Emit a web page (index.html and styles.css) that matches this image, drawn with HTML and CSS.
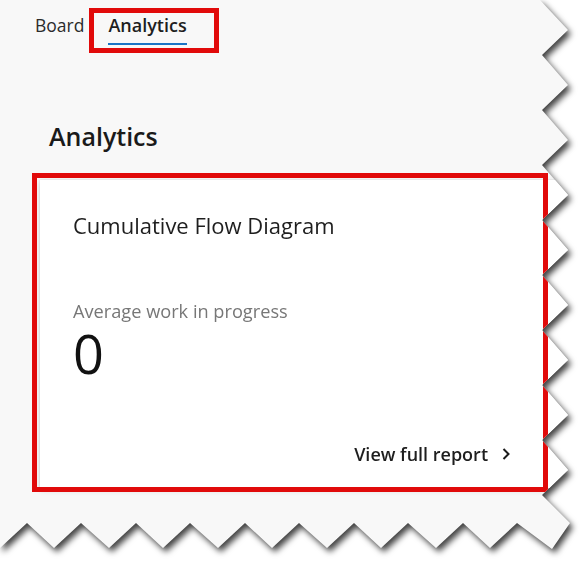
FILE: index.html
```html
<!DOCTYPE html>
<html lang="en">
<head>
<meta charset="utf-8">
<title>Analytics</title>
<link rel="stylesheet" href="styles.css">
</head>
<body>
<div class="frame">
  <div class="sheet">
    <nav class="tabs">
      <span class="tab">Board</span>
      <span class="tab tab-active">Analytics<span class="mark mark-tab"></span></span>
    </nav>
    <h1 class="heading">Analytics</h1>
    <section class="card">
      <span class="mark mark-card"></span>
      <h2 class="card-title">Cumulative Flow Diagram</h2>
      <div class="metric-label">Average work in progress</div>
      <div class="metric-value">0</div>
      <div class="card-footer">
        <span class="report-link">View full report</span>
        <svg class="chevron" width="9" height="12" viewBox="0 0 9 12" aria-hidden="true"><polyline points="1.5,1 6.5,6 1.5,11" fill="none" stroke="#1b1b1b" stroke-width="2"/></svg>
      </div>
    </section>
  </div>
</div>
</body>
</html>
```
FILE: styles.css
```css
html, body {
  margin: 0;
  padding: 0;
  background: #ffffff;
}

body {
  width: 581px;
  height: 564px;
  overflow: hidden;
  font-family: "Open Sans", "Noto Sans", sans-serif;
  color: #1e1e1e;
}

.frame {
  filter: drop-shadow(3px 4px 3px rgba(0, 0, 0, 0.75));
}

.sheet {
  height: 564px;
  background: #f8f8f8;
  display: flex;
  flex-direction: column;
  clip-path: polygon(0 0, 540px 0, 568px 30px, 542px 55px, 568px 85px, 542px 110px, 568px 140px, 542px 165px, 568px 195px, 542px 220px, 568px 250px, 542px 275px, 568px 305px, 542px 330px, 568px 360px, 542px 385px, 568px 415px, 542px 440px, 568px 470px, 542px 495px, 570px 523px, 552px 549px, 517px 523px, 490px 548px, 463px 523px, 436px 548px, 408px 523px, 381px 548px, 354px 523px, 327px 548px, 299px 523px, 272px 548px, 245px 523px, 218px 548px, 190px 523px, 163px 548px, 136px 523px, 109px 548px, 81px 523px, 54px 548px, 27px 523px, 0 548px);
}

.tabs {
  display: flex;
  align-items: flex-start;
  padding: 13px 0 0 35px;
}

.tab {
  font-size: 17.5px;
  line-height: 24px;
  padding-bottom: 6px;
  color: #2b2b2b;
}

.tab-active {
  position: relative;
  margin-left: 24px;
  font-size: 18px;
  font-weight: 600;
  color: #1e1e1e;
  border-bottom: 2px solid #1b74c5;
}

.mark {
  position: absolute;
  box-sizing: border-box;
  border: 5px solid #e10a0a;
  pointer-events: none;
}

.mark-tab {
  left: -19px;
  top: -5px;
  width: 130px;
  height: 45px;
}

.heading {
  margin: 73px 0 0 49px;
  font-size: 25px;
  line-height: 36px;
  font-weight: 600;
  color: #1a1a1a;
}

.card {
  position: relative;
  margin: 26px 0 0 40px;
  height: 308px;
  box-sizing: border-box;
  padding: 31px 70px 0 33px;
  background: #ffffff;
  box-shadow: 0 2px 6px rgba(0, 0, 0, 0.16), 0 0 1px rgba(0, 0, 0, 0.2);
  display: flex;
  flex-direction: column;
}

.mark-card {
  left: -8px;
  top: -7px;
  width: 516px;
  height: 319px;
}

.card-title {
  margin: 0;
  font-size: 22px;
  line-height: 28px;
  font-weight: 400;
  color: #1e1e1e;
}

.metric-label {
  margin-top: 60px;
  font-size: 18.2px;
  line-height: 24px;
  color: #777777;
}

.metric-value {
  font-size: 54px;
  line-height: 60px;
  color: #111111;
}

.card-footer {
  margin-top: auto;
  margin-bottom: 22px;
  display: flex;
  align-items: center;
  justify-content: flex-end;
  gap: 14px;
}

.report-link {
  font-size: 18px;
  line-height: 24px;
  font-weight: 600;
  color: #1e1e1e;
}

.chevron {
  display: block;
}
```
